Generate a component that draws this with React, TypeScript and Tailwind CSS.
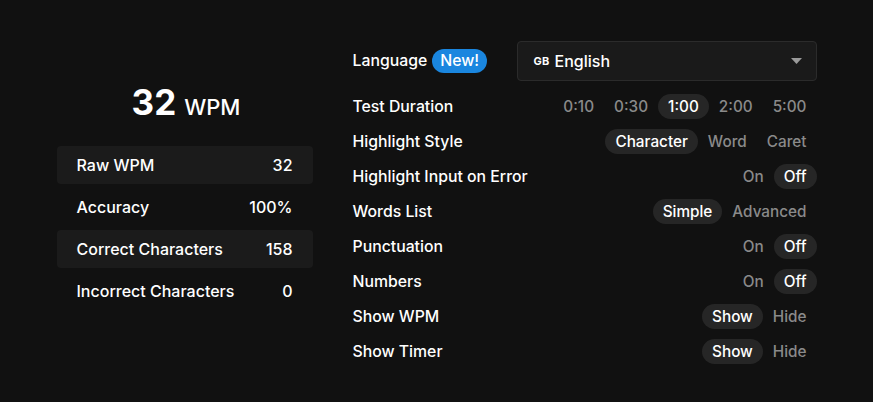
const stats = [
  { label: "Raw WPM", value: "32", striped: true },
  { label: "Accuracy", value: "100%", striped: false },
  { label: "Correct Characters", value: "158", striped: true },
  { label: "Incorrect Characters", value: "0", striped: false },
];

const settings = [
  { label: "Test Duration", options: ["0:10", "0:30", "1:00", "2:00", "5:00"], active: "1:00" },
  { label: "Highlight Style", options: ["Character", "Word", "Caret"], active: "Character" },
  { label: "Highlight Input on Error", options: ["On", "Off"], active: "Off" },
  { label: "Words List", options: ["Simple", "Advanced"], active: "Simple" },
  { label: "Punctuation", options: ["On", "Off"], active: "Off" },
  { label: "Numbers", options: ["On", "Off"], active: "Off" },
  { label: "Show WPM", options: ["Show", "Hide"], active: "Show" },
  { label: "Show Timer", options: ["Show", "Hide"], active: "Show" },
];

const Segmented = ({ options, active }: { options: string[]; active: string }) => {
  return (
    <div className="flex items-center text-[15.3px]">
      {options.map((o) =>
        o === active ? (
          <span key={o} className="h-[25px] leading-[25px] px-[10px] rounded-full bg-[#262626] text-white">
            {o}
          </span>
        ) : (
          <span key={o} className="h-[25px] leading-[25px] px-[10px] text-[#8a8a8a]">
            {o}
          </span>
        )
      )}
    </div>
  );
};

export default function App() {
  return (
    <div
      className="w-full min-h-[402px] bg-[#111111] flex justify-center items-start gap-10 text-white"
      style={{ fontFamily: "Inter, 'Noto Sans', sans-serif" }}
    >
      {/* results */}
      <div className="w-[256px] mt-[85px] flex flex-col">
        <div className="flex items-baseline justify-center gap-[8px] mb-[26px] pl-[3px]">
          <span className="text-[35px] font-bold leading-none">32</span>
          <span className="text-[22px] font-medium leading-none">WPM</span>
        </div>
        <div className="flex flex-col gap-1">
          {stats.map((s) => (
            <div
              key={s.label}
              className={
                "h-[38px] flex items-center justify-between px-5 rounded text-[16px] font-medium " +
                (s.striped ? "bg-[#1b1b1b]" : "")
              }
            >
              <span>{s.label}</span>
              <span>{s.value}</span>
            </div>
          ))}
        </div>
      </div>

      {/* settings */}
      <div className="w-[464px] mt-[41px] flex flex-col text-[15.8px] font-medium">
        <div className="h-[40px] flex items-center mb-2">
          <span>Language</span>
          <span className="ml-[5px] h-[24px] leading-[24px] px-[8px] rounded-full bg-[#1a86df] text-white">New!</span>
          <div className="ml-auto w-[300px] h-[40px] rounded border border-[#2b2b2b] bg-[#1a1a1a] flex items-center pl-4 pr-[14px]">
            <span className="text-[11px] font-bold tracking-wide mr-[5px]">GB</span>
            <span className="text-[16px]">English</span>
            <svg className="ml-auto" width="11" height="6" viewBox="0 0 11 6">
              <path d="M0 0h11L5.5 6z" fill="#9a9a9a" />
            </svg>
          </div>
        </div>
        {settings.map((s) => (
          <div key={s.label} className="h-[35px] flex items-center justify-between">
            <span>{s.label}</span>
            <Segmented options={s.options} active={s.active} />
          </div>
        ))}
      </div>
    </div>
  );
}
